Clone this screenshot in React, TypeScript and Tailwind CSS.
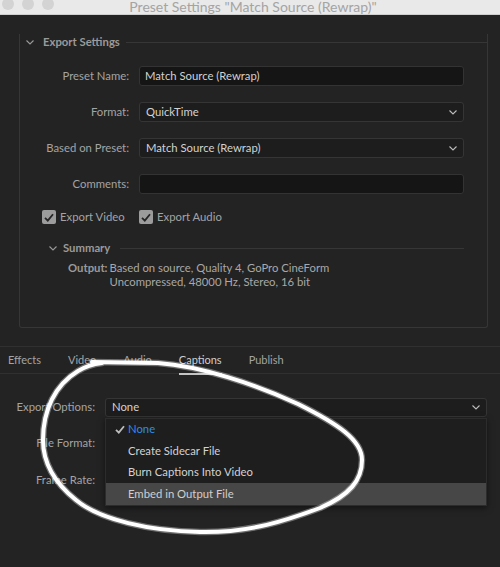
import * as React from "react";

const font = { fontFamily: "Lato, 'Noto Sans', sans-serif" };

function Chevron({ className = "" }: { className?: string }) {
  return (
    <svg width="8" height="5" viewBox="0 0 8 5" className={className}>
      <polyline points="0.5,0.5 4,4 7.5,0.5" fill="none" stroke="currentColor" strokeWidth="1.1" />
    </svg>
  );
}

function Check({ className = "" }: { className?: string }) {
  return (
    <svg width="10" height="9" viewBox="0 0 10 9" className={className}>
      <polyline points="1,4.8 3.8,7.6 9,1.2" fill="none" stroke="currentColor" strokeWidth="1.8" />
    </svg>
  );
}

function Row({ label, children, labelW = "w-[109px]" }: { label: string; children: React.ReactNode; labelW?: string }) {
  return (
    <div className="flex items-center gap-[10px]">
      <div className={`${labelW} shrink-0 text-right text-[11.3px] text-[#a3a3a3]`}>{label}</div>
      <div className="flex-1">{children}</div>
    </div>
  );
}

function TextField({ value = "" }: { value?: string }) {
  return (
    <div className="flex h-[20px] items-center rounded-[3px] border border-[#333] bg-[#151515] px-[5px] text-[11.3px] text-[#d2d2d2]">
      {value}
    </div>
  );
}

function SelectField({ value, h = "h-[20px]" }: { value: string; h?: string }) {
  return (
    <div className={`flex ${h} items-center justify-between rounded-[3px] border border-[#353535] bg-[#1d1d1d] pl-[6px] pr-[6px] text-[11.3px] text-[#d2d2d2]`}>
      <span>{value}</span>
      <Chevron className="text-[#bdbdbd]" />
    </div>
  );
}

function CheckBox({ label }: { label: string }) {
  return (
    <div className="flex items-center gap-[4px]">
      <div className="flex h-[14px] w-[14px] items-center justify-center rounded-[2px] bg-[#9c9c9c]">
        <Check className="text-[#262626]" />
      </div>
      <span className="text-[11.3px] text-[#a3a3a3]">{label}</span>
    </div>
  );
}

const menuItems = ["None", "Create Sidecar File", "Burn Captions Into Video", "Embed in Output File"];

const loop =
  "M 92 362 L 158 363 C 200 366 255 384 298 404 C 338 424 362 440 362 460 C 362 480 350 495 320 508 C 288 520 250 533 200 532 C 150 531 100 520 76 500 C 56 484 43 465 43 440 C 43 410 55 385 78 371 C 86 366 94 364 102 363";

export default function App() {
  return (
    <div className="relative h-[567px] w-[500px] overflow-hidden bg-[#232323]" style={font}>
      {/* title bar */}
      <div className="relative h-[15px] overflow-hidden border-b border-[#cfcfcf] bg-[#e9e9e9]">
        <div className="absolute left-[2px] -top-[2px] flex gap-[8px]">
          <div className="h-[12px] w-[12px] rounded-full bg-[#d3d3d3]" />
          <div className="h-[12px] w-[12px] rounded-full bg-[#d3d3d3]" />
          <div className="h-[12px] w-[12px] rounded-full bg-[#d3d3d3]" />
        </div>
        <div className="pl-[6px] text-center text-[14px] leading-[13px] text-[#a4a4a4]">
          Preset Settings "Match Source (Rewrap)"
        </div>
      </div>

      {/* export settings group */}
      <div className="ml-[19px] mr-[12px] mt-[27px] rounded-b-[3px] border-x border-b border-[#363636] pb-[38px]">
        <div className="-mt-[8px] flex h-[16px] items-center">
          <div className="flex h-full items-center bg-[#232323] pl-[6px] pr-[6px]">
            <Chevron className="text-[#9a9a9a]" />
            <span className="ml-[9px] text-[11.3px] font-bold text-[#9a9a9a]">Export Settings</span>
          </div>
          <div className="h-px flex-1 bg-[#363636]" />
        </div>

        <div className="mt-[16px] flex flex-col gap-[16px] pr-[23px]">
          <Row label="Preset Name:"><TextField value="Match Source (Rewrap)" /></Row>
          <Row label="Format:"><SelectField value="QuickTime" /></Row>
          <Row label="Based on Preset:"><SelectField value="Match Source (Rewrap)" /></Row>
          <Row label="Comments:"><TextField /></Row>
        </div>

        <div className="mt-[15px] flex items-center pl-[22px]">
          <div className="w-[97px]"><CheckBox label="Export Video" /></div>
          <CheckBox label="Export Audio" />
        </div>

        <div className="ml-[29px] mr-[23px] mt-[16px] flex h-[14px] items-center">
          <Chevron className="text-[#9a9a9a]" />
          <span className="ml-[6px] text-[11.3px] font-bold text-[#9a9a9a]">Summary</span>
          <div className="ml-[10px] h-px flex-1 bg-[#363636]" />
        </div>

        <div className="ml-[48px] mt-[5px] flex text-[11.3px] leading-[14px]">
          <span className="font-bold text-[#9a9a9a]">Output:</span>
          <div className="ml-[2px] text-[#a8a8a8]">
            <div>Based on source, Quality 4, GoPro CineForm</div>
            <div>Uncompressed, 48000 Hz, Stereo, 16 bit</div>
          </div>
        </div>
      </div>

      {/* tabs */}
      <div className="mt-[18px] border-y border-[#303030]">
        <div className="flex h-[26px] items-center gap-[27px] pl-[8px] pt-[1px] text-[11px] text-[#a3a3a3]">
          <span>Effects</span>
          <span>Video</span>
          <span>Audio</span>
          <span className="relative text-[#cfcfcf]">
            Captions
            <span className="absolute -bottom-[6px] left-0 right-0 h-[2px] bg-[#c4c4c4]" />
          </span>
          <span>Publish</span>
        </div>
      </div>

      {/* captions panel */}
      <div className="mt-[24px] flex flex-col gap-[17px] pr-[13px]">
        <div className="relative">
          <Row label="Export Options:" labelW="w-[95px]"><SelectField value="None" h="h-[19px]" /></Row>
          <div className="absolute left-[105px] right-0 top-[20px] z-10 border border-[#2c2c2c] bg-[#1e1e1e] shadow-[0_2px_6px_rgba(0,0,0,0.5)]">
            {menuItems.map((item, i) => (
              <div
                key={item}
                className={`flex h-[21.5px] items-center text-[11.3px] ${i === 3 ? "bg-[#474747] text-[#cfcfcf]" : "text-[#d2d2d2]"}`}
              >
                <div className="flex w-[22px] justify-end pr-[3px]">
                  {i === 0 && <Check className="text-[#bdbdbd]" />}
                </div>
                <span className={i === 0 ? "text-[#2d8ceb]" : ""}>{item}</span>
              </div>
            ))}
          </div>
        </div>
        <Row label="File Format:" labelW="w-[95px]"><SelectField value="" /></Row>
        <Row label="Frame Rate:" labelW="w-[95px]"><SelectField value="" /></Row>
      </div>

      {/* hand-drawn annotation loop */}
      <svg className="pointer-events-none absolute inset-0 z-20" width="500" height="567" viewBox="0 0 500 567">
        <path d={loop} fill="none" stroke="rgba(255,255,255,0.35)" strokeWidth="6.5" strokeLinecap="round" />
        <path d={loop} fill="none" stroke="#ffffff" strokeWidth="4" strokeLinecap="round" />
      </svg>
    </div>
  );
}
